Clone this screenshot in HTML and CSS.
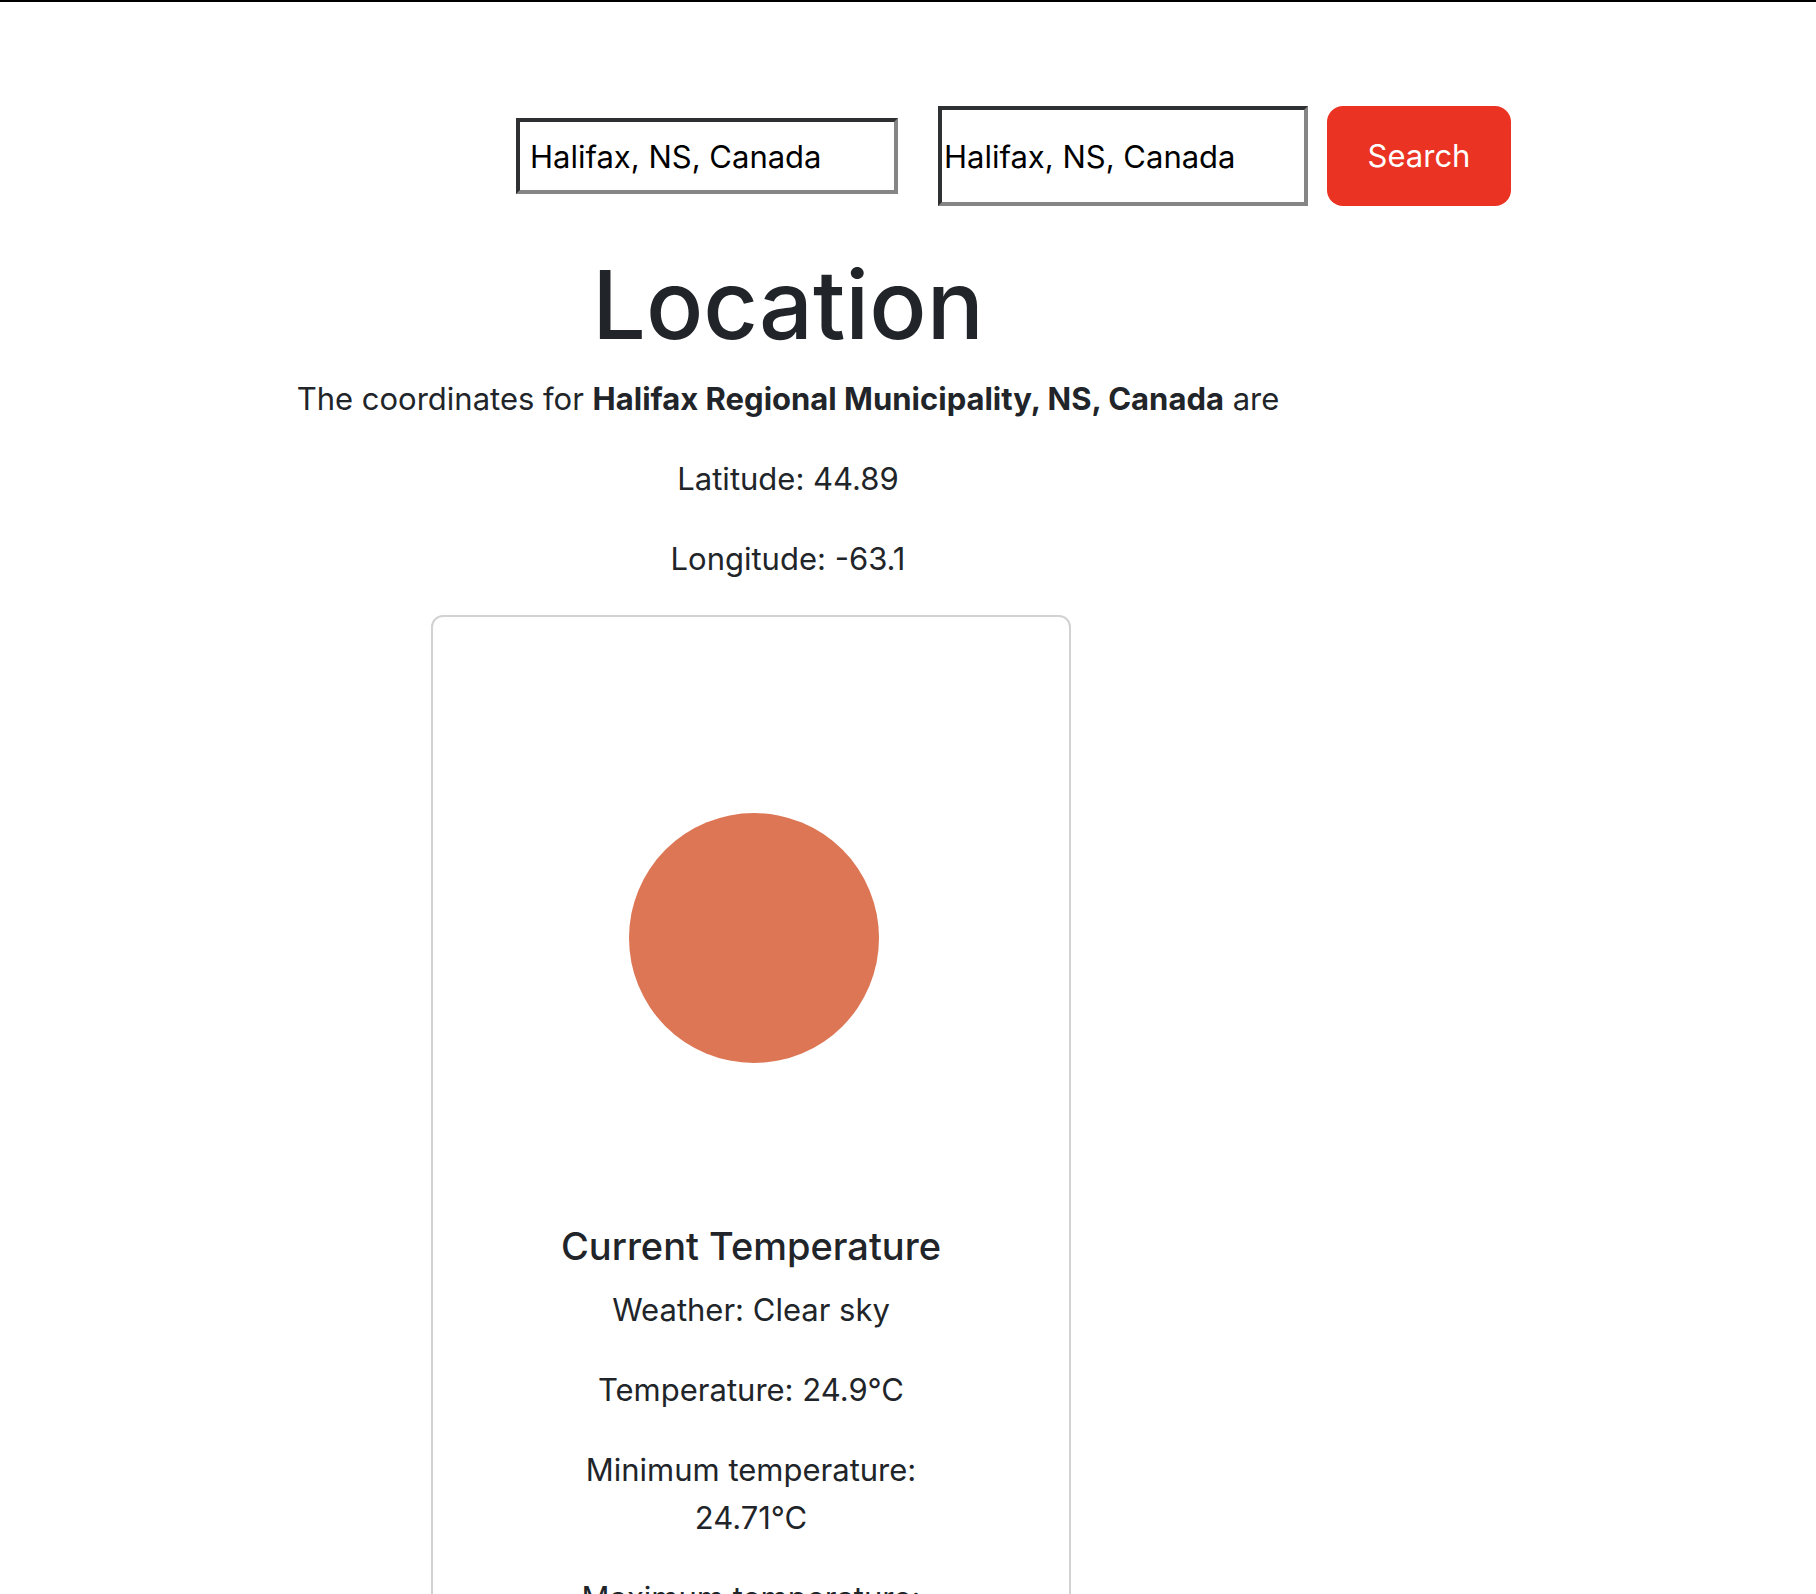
FILE: index.html
```html
<!DOCTYPE html>
<html lang="en">
<head>
<meta charset="utf-8">
<meta name="viewport" content="width=device-width, initial-scale=1">
<title>Weather</title>
<link rel="stylesheet" href="styles.css">
</head>
<body>
<form class="search">
  <input class="field field-padded" type="text" aria-label="City" value="Halifax, NS, Canada">
  <input class="field field-tall" type="text" aria-label="Selected city" value="Halifax, NS, Canada">
  <button class="search-button" type="button">Search</button>
</form>
<main>
  <section class="location">
    <h1>Location</h1>
    <p>The coordinates for <strong>Halifax Regional Municipality, NS, Canada</strong> are</p>
    <p>Latitude: 44.89</p>
    <p>Longitude: -63.1</p>
  </section>
  <section class="forecast">
    <article class="card">
      <svg class="card-icon" viewBox="0 0 636 605" role="img" aria-label="Clear sky">
        <circle cx="321" cy="321" r="125" fill="#dc7655"/>
      </svg>
      <div class="card-body">
        <h2>Current Temperature</h2>
        <p>Weather: Clear sky</p>
        <p>Temperature: 24.9°C</p>
        <p>Minimum temperature: 24.71°C</p>
        <p>Maximum temperature:</p>
      </div>
    </article>
  </section>
</main>
</body>
</html>
```
FILE: styles.css
```css
* {
  box-sizing: border-box;
}

body {
  margin: 0;
  height: 100vh;
  overflow: hidden;
  border-top: 2px solid #000;
  background: #fff;
  color: #212529;
  font: 400 31px/48px Inter, "Liberation Sans", sans-serif;
  text-align: center;
}

h1,
h2,
p {
  margin: 0;
}

h1 {
  margin-bottom: 10px;
  font-size: 95px;
  line-height: 120px;
  font-weight: 500;
}

h2 {
  margin-bottom: 16px;
  font-size: 38px;
  line-height: 48px;
  font-weight: 500;
}

p {
  margin-bottom: 32px;
}

.search {
  display: flex;
  align-items: center;
  justify-content: center;
  padding: 104px 0 39px 211px;
}

.field {
  border: 4px solid;
  border-color: #2f3032 #858585 #858585 #2f3032;
  border-radius: 0;
  background: #fff;
  color: #000;
  font: inherit;
}

.field-padded {
  width: 382px;
  height: 76px;
  margin-right: 40px;
  padding: 0 10px;
}

.field-tall {
  width: 370px;
  height: 100px;
  margin-right: 19px;
  padding: 0 2px;
}

.search-button {
  width: 184px;
  height: 100px;
  padding: 0;
  border: 0;
  border-radius: 16px;
  background: #ea3323;
  color: #fff;
  font: inherit;
}

.location {
  padding-right: 240px;
}

.forecast {
  display: flex;
  justify-content: center;
  padding-right: 314px;
}

.card {
  width: 640px;
  border: 2px solid #d2d2d2;
  border-radius: 12px;
}

.card-icon {
  display: block;
  width: 100%;
}

.card-body {
  padding: 0 120px 32px;
}
```
